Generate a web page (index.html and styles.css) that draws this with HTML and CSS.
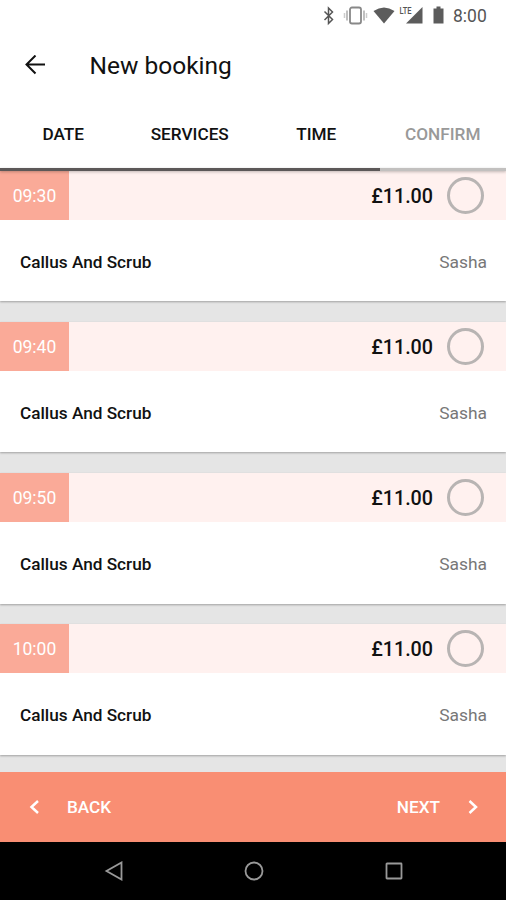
FILE: index.html
```html
<!DOCTYPE html>
<html lang="en">
<head>
  <meta charset="UTF-8" />
  <meta name="viewport" content="width=device-width, initial-scale=1.0"/>
  <title>New booking</title>
  <link rel="stylesheet" href="styles.css">
</head>
<body>
  <div class="status">
    <svg width="150" height="32" viewBox="0 0 150 32">
      <path d="M5.500 11.500l8 8-4 4V8l4 4-8 8" fill="none" stroke="#555" stroke-width="1.500"/>
      <rect x="31" y="7.500" width="11" height="16" rx="2" fill="none" stroke="#888" stroke-width="1.800"/>
      <path d="M28 10.500v10M45 10.500v10" stroke="#aaa" stroke-width="1.500"/>
      <path d="M25.500 13v5M47.500 13v5" stroke="#ccc" stroke-width="1.500"/>
      <path d="M54.500 11q10.500-7 21 0L65 23.500z" fill="#5c5c5c"/>
      <path d="M103.500 7v16.500H87z" fill="#5c5c5c"/>
      <path d="M80 4h11v10H80z" fill="#fff"/>
      <text class="lte" x="80.500" y="14" textLength="12" lengthAdjust="spacingAndGlyphs">LTE</text>
      <path d="M114.500 8.500h3V6.500h4v2h3v15h-10z" fill="#5c5c5c"/>
    </svg>
    <span class="clock">8:00</span>
  </div>

  <div class="header">
    <svg width="20" height="20" viewBox="0 0 20 20" fill="none" stroke="#111" stroke-width="2">
      <path d="M20 9.500H2M10.500 0.500L1.500 9.500l9 9"/>
    </svg>
    <h1>New booking</h1>
  </div>

  <div class="tabs">
    <div class="tab">DATE</div>
    <div class="tab">SERVICES</div>
    <div class="tab">TIME</div>
    <div class="tab off">CONFIRM</div>
  </div>
  <div class="progress"><div class="done"></div></div>

  <div class="list">
    <div class="card">
      <div class="top"><span class="time">09:30</span><span class="price">£11.00</span><span class="radio"></span></div>
      <div class="info"><span class="service">Callus And Scrub</span><span class="staff">Sasha</span></div>
    </div>
    <div class="card">
      <div class="top"><span class="time">09:40</span><span class="price">£11.00</span><span class="radio"></span></div>
      <div class="info"><span class="service">Callus And Scrub</span><span class="staff">Sasha</span></div>
    </div>
    <div class="card">
      <div class="top"><span class="time">09:50</span><span class="price">£11.00</span><span class="radio"></span></div>
      <div class="info"><span class="service">Callus And Scrub</span><span class="staff">Sasha</span></div>
    </div>
    <div class="card">
      <div class="top"><span class="time">10:00</span><span class="price">£11.00</span><span class="radio"></span></div>
      <div class="info"><span class="service">Callus And Scrub</span><span class="staff">Sasha</span></div>
    </div>
  </div>

  <div class="footer">
    <div class="step">
      <svg width="10" height="14" viewBox="0 0 10 14" fill="none" stroke="#fff" stroke-width="2.500"><path d="M9 1L2.500 7L9 13"/></svg>
      <span class="back">BACK</span>
    </div>
    <div class="step">
      <span class="next">NEXT</span>
      <svg width="10" height="14" viewBox="0 0 10 14" fill="none" stroke="#fff" stroke-width="2.500"><path d="M1.500 1L8 7l-6.500 6"/></svg>
    </div>
  </div>

  <div class="navbar">
    <svg width="20" height="20" viewBox="0 0 20 20"><path d="M17.500 1.500v17L2.500 10z"/></svg>
    <svg width="20" height="20" viewBox="0 0 20 20"><circle cx="10" cy="10" r="8.500"/></svg>
    <svg width="20" height="20" viewBox="0 0 20 20"><rect x="2.500" y="2.500" width="15" height="15" rx="0.500"/></svg>
  </div>
</body>
</html>
```
FILE: styles.css
```css
* { box-sizing: border-box; }
body { font-family: Roboto, sans-serif; background: #e5e5e5; color: #111; margin: 0; height: 900px; display: flex; flex-direction: column; overflow: hidden; }
svg { display: block; flex: none; }
.status { height: 32px; flex: none; background: white; display: flex; align-items: center; justify-content: flex-end; padding-right: 19px; }
.lte { font-size: 9px; font-weight: 500; fill: #555; }
.clock { width: 34px; margin-left: -16px; font-size: 17.500px; color: #555; white-space: nowrap; }
.header { height: 66px; flex: none; background: white; display: flex; align-items: center; padding-left: 25px; }
h1 { margin: 0 0 0 44.500px; font-size: 24.500px; font-weight: 400; }
.tabs { height: 69.500px; flex: none; background: white; display: grid; grid-template-columns: repeat(4, 1fr); line-height: 72px; text-align: center; font-size: 17.200px; font-weight: 500; }
.off { color: #999; }
.progress { height: 3.500px; flex: none; background: #c2c0bf; position: relative; z-index: 1; box-shadow: 0 1px 3px rgba(0, 0, 0, 0.25); }
.done { width: 75%; height: 100%; background: #5c5858; }
.list { flex: 1; min-height: 0; overflow: hidden; display: flex; flex-direction: column; gap: 20.400px; }
.card { height: 130.800px; margin-top: -0.500px; flex: none; background: white; box-shadow: 0 1px 2px rgba(0, 0, 0, 0.3); }
.card + .card { margin-top: 0; }
.top { height: 49px; background: #fff1ef; display: flex; align-items: center; padding-right: 22.500px; }
.time { width: 69px; height: 49px; line-height: 50px; background: #faaa98; color: white; text-align: center; font-size: 17.500px; }
.price { margin-left: auto; padding-top: 2px; font-size: 19.700px; font-weight: 500; }
.radio { width: 37px; height: 37px; margin-left: 13.500px; border: 3px solid #b8b4b3; border-radius: 50%; }
.info { height: 81.800px; display: flex; align-items: center; justify-content: space-between; padding: 3px 19px 0 20px; font-size: 17.400px; }
.service { font-size: 17.200px; font-weight: 500; }
.staff { color: #777; }
.footer { height: 69.500px; flex: none; background: #f98e73; color: white; display: flex; align-items: center; justify-content: space-between; padding: 0 28px 0 29px; font-size: 17.200px; font-weight: 500; }
.step { display: flex; align-items: center; }
.back { margin-left: 28px; }
.next { margin-right: 28px; }
.navbar { height: 58.500px; flex: none; background: black; display: flex; align-items: center; justify-content: center; gap: 120px; padding-left: 1px; }
.navbar svg { fill: none; stroke: #999; stroke-width: 1.800px; }
```
